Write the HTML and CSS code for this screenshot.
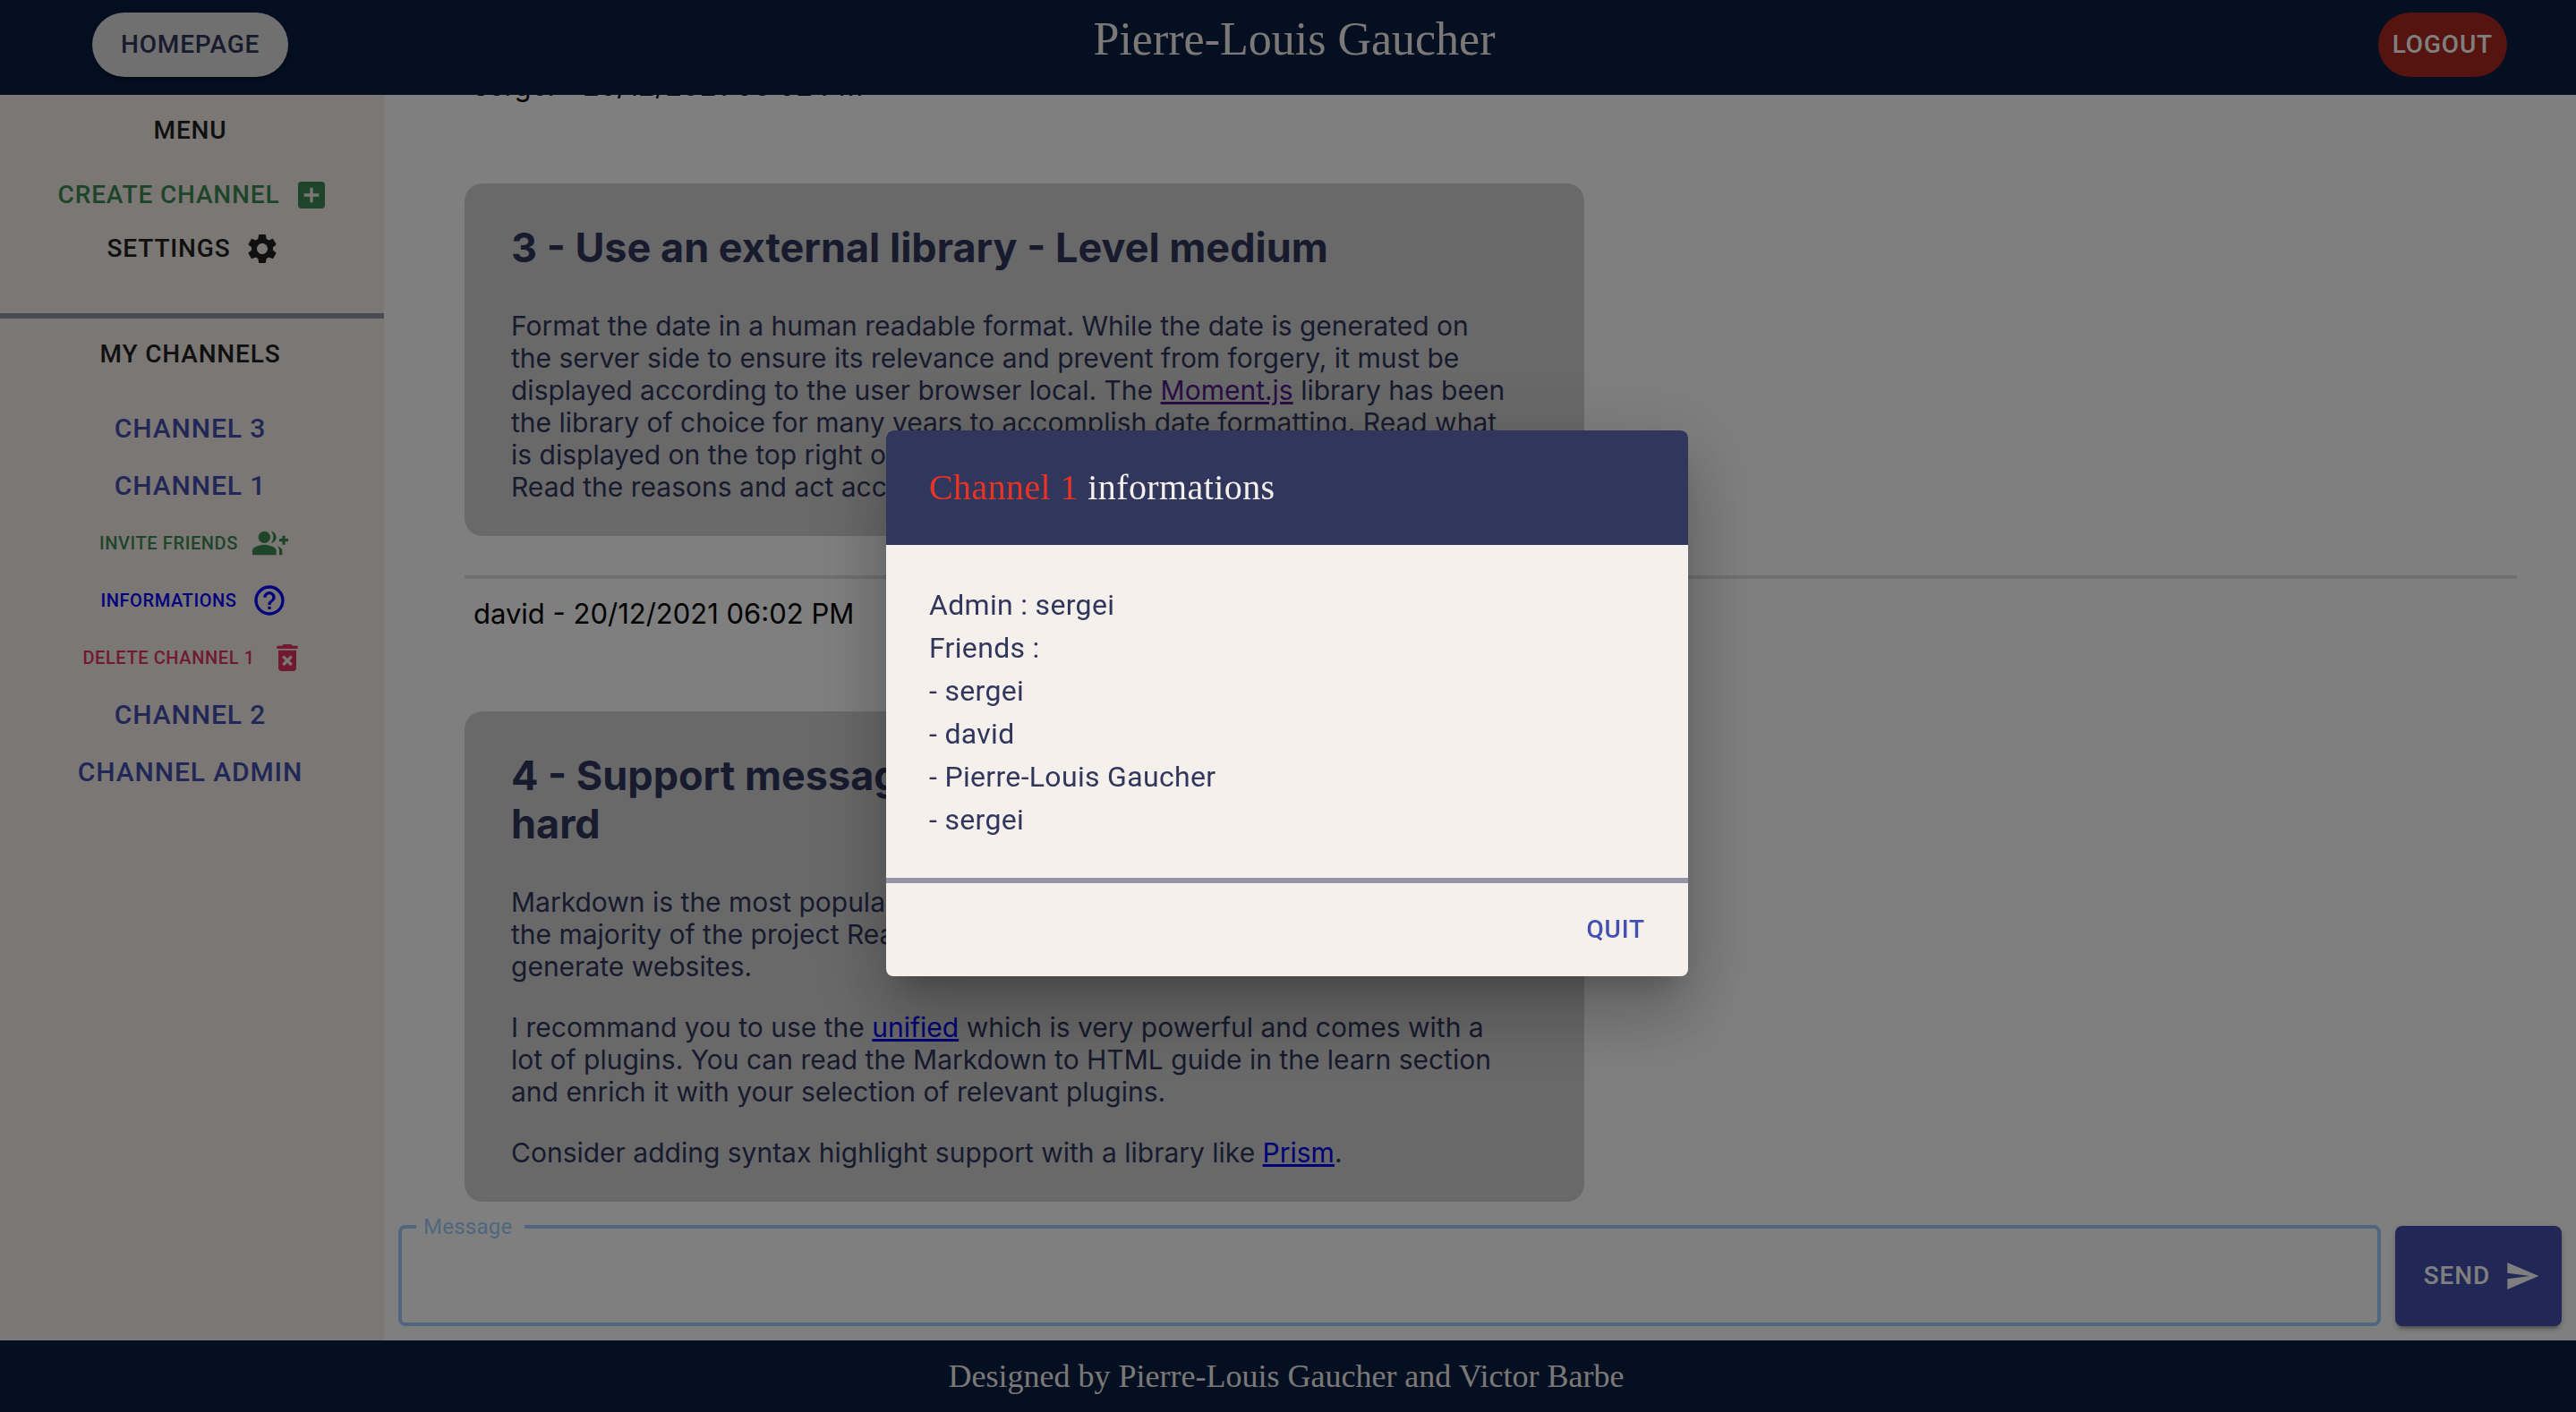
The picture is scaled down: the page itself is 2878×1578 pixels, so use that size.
FILE: index.html
```html
<!DOCTYPE html>
<html lang="en">
<head>
  <meta charset="utf-8">
  <title>Channels</title>
  <link rel="stylesheet" href="styles.css">
</head>
<body>
  <div class="app">
    <header class="topbar">
      <button class="btn btn-home" type="button">HOMEPAGE</button>
      <h1 class="topbar-title">Pierre-Louis Gaucher</h1>
      <button class="btn btn-logout" type="button">LOGOUT</button>
    </header>

    <div class="body">
      <aside class="sidebar">
        <section class="menu">
          <h2 class="side-title">MENU</h2>
          <button class="btn side-btn green" type="button">CREATE CHANNEL
            <svg class="icon" viewBox="0 0 24 24"><path d="M19 3H5c-1.11 0-2 .9-2 2v14c0 1.1.89 2 2 2h14c1.1 0 2-.9 2-2V5c0-1.1-.9-2-2-2zm-2 10h-4v4h-2v-4H7v-2h4V7h2v4h4v2z"/></svg>
          </button>
          <button class="btn side-btn dark" type="button">SETTINGS
            <svg class="icon" viewBox="0 0 24 24"><path d="M19.14 12.94c.04-.3.06-.61.06-.94 0-.32-.02-.64-.07-.94l2.03-1.58c.18-.14.23-.41.12-.61l-1.92-3.32c-.12-.22-.37-.29-.59-.22l-2.39.96c-.5-.38-1.03-.7-1.62-.94l-.36-2.54c-.04-.24-.24-.41-.48-.41h-3.84c-.24 0-.43.17-.47.41l-.36 2.54c-.59.24-1.13.57-1.62.94l-2.39-.96c-.22-.08-.47 0-.59.22L2.74 8.87c-.12.21-.08.47.12.61l2.03 1.58c-.05.3-.09.63-.09.94s.02.64.07.94l-2.03 1.58c-.18.14-.23.41-.12.61l1.92 3.32c.12.22.37.29.59.22l2.39-.96c.5.38 1.03.7 1.62.94l.36 2.54c.05.24.24.41.48.41h3.84c.24 0 .44-.17.47-.41l.36-2.54c.59-.24 1.13-.56 1.62-.94l2.39.96c.22.08.47 0 .59-.22l1.92-3.32c.12-.22.07-.47-.12-.61l-2.01-1.58zM12 15.6c-1.98 0-3.6-1.62-3.6-3.6s1.62-3.6 3.6-3.6 3.6 1.62 3.6 3.6-1.62 3.6-3.6 3.6z"/></svg>
          </button>
        </section>
        <nav class="channels">
          <h2 class="side-title">MY CHANNELS</h2>
          <ul class="channel-list">
            <li><button class="btn channel-btn" type="button">CHANNEL 3</button></li>
            <li><button class="btn channel-btn" type="button">CHANNEL 1</button></li>
            <li><button class="btn action-btn green" type="button">INVITE FRIENDS
              <svg class="icon" viewBox="0 0 24 24"><path d="M22 9V7h-2v2h-2v2h2v2h2v-2h2V9zM8 12c2.21 0 4-1.79 4-4s-1.79-4-4-4-4 1.79-4 4 1.79 4 4 4zm0 1c-2.67 0-8 1.34-8 4v3h16v-3c0-2.66-5.33-4-8-4zm4.51-8.95C13.43 5.11 14 6.49 14 8s-.57 2.89-1.49 3.95C14.47 11.7 16 10.04 16 8s-1.53-3.7-3.49-3.95zm4.02 9.78C17.42 14.66 18 15.7 18 17v3h2v-3c0-1.45-1.59-2.51-3.47-3.17z"/></svg>
            </button></li>
            <li><button class="btn action-btn blue" type="button">INFORMATIONS
              <svg class="icon" viewBox="0 0 24 24"><path d="M11 18h2v-2h-2v2zm1-16C6.48 2 2 6.48 2 12s4.48 10 10 10 10-4.48 10-10S17.52 2 12 2zm0 18c-4.41 0-8-3.59-8-8s3.59-8 8-8 8 3.59 8 8-3.59 8-8 8zm0-14c-2.21 0-4 1.79-4 4h2c0-1.1.9-2 2-2s2 .9 2 2c0 2-3 1.75-3 5h2c0-2.25 3-2.5 3-5 0-2.21-1.79-4-4-4z"/></svg>
            </button></li>
            <li><button class="btn action-btn pink" type="button">DELETE CHANNEL 1
              <svg class="icon" viewBox="0 0 24 24"><path d="M6 19c0 1.1.9 2 2 2h8c1.1 0 2-.9 2-2V7H6v12zm2.46-7.12l1.41-1.41L12 12.59l2.12-2.12 1.41 1.41L13.41 14l2.12 2.12-1.41 1.41L12 15.41l-2.12 2.12-1.41-1.41L10.59 14l-2.13-2.12zM15.5 4l-1-1h-5l-1 1H5v2h14V4z"/></svg>
            </button></li>
            <li><button class="btn channel-btn" type="button">CHANNEL 2</button></li>
            <li><button class="btn channel-btn" type="button">CHANNEL ADMIN</button></li>
          </ul>
        </nav>
      </aside>

      <main class="main">
        <div class="messages">
          <article class="message">
            <p class="meta">sergei - 20/12/2021 06:02 PM</p>
            <div class="bubble">
              <h2>3 - Use an external library - Level medium</h2>
              <p>Format the date in a human readable format. While the date is generated on the server side to ensure its relevance and prevent from forgery, it must be displayed according to the user browser local. The <a class="visited" href="#moment">Moment.js</a> library has been the library of choice for many years to accomplish date formatting. Read what is displayed on the top right of their website.<br>Read the reasons and act accordingly.</p>
            </div>
          </article>
          <article class="message">
            <p class="meta">david - 20/12/2021 06:02 PM</p>
            <div class="bubble">
              <h2>4 - Support messages in Markdown format - Level hard</h2>
              <p>Markdown is the most popular text format for developers. It is in<br>the majority of the project Readme files and is also used to<br>generate websites.</p>
              <p>I recommand you to use the <a href="#unified">unified</a> which is very powerful and comes with a lot of plugins. You can read the Markdown to HTML guide in the learn section and enrich it with your selection of relevant plugins.</p>
              <p>Consider adding syntax highlight support with a library like <a href="#prism">Prism</a>.</p>
            </div>
          </article>
        </div>
        <form class="composer">
          <fieldset class="field">
            <legend><label for="message">Message</label></legend>
            <textarea id="message" rows="2"></textarea>
          </fieldset>
          <button class="btn btn-send" type="button">SEND
            <svg class="icon" viewBox="0 0 24 24"><path d="M2.01 21L23 12 2.01 3 2 10l15 2-15 2z"/></svg>
          </button>
        </form>
      </main>
    </div>

    <footer class="footer">Designed by Pierre-Louis Gaucher and Victor Barbe</footer>
  </div>

  <div class="backdrop">
    <section class="dialog" role="dialog" aria-modal="true" aria-labelledby="dialog-title">
      <h2 class="dialog-title" id="dialog-title"><span class="accent">Channel 1</span> informations</h2>
      <div class="dialog-content">
        <p>Admin : sergei</p>
        <p>Friends :</p>
        <p>- sergei</p>
        <p>- david</p>
        <p>- Pierre-Louis Gaucher</p>
        <p>- sergei</p>
      </div>
      <div class="dialog-actions">
        <button class="btn btn-quit" type="button">QUIT</button>
      </div>
    </section>
  </div>
</body>
</html>
```
FILE: styles.css
```css
* {
  box-sizing: border-box;
}

body,
h1,
h2,
p,
ul {
  margin: 0;
  padding: 0;
}

body {
  font-family: Inter, "Liberation Sans", sans-serif;
  font-size: 30px;
  line-height: 36px;
  background: #fff;
}

.app {
  display: flex;
  flex-direction: column;
  height: 100vh;
}

/* Buttons */

.btn {
  display: inline-flex;
  align-items: center;
  justify-content: center;
  padding: 12px 16px;
  border: 0;
  border-radius: 8px;
  background: transparent;
  color: #4350af;
  font: 500 28px/48px Roboto, "Liberation Sans", sans-serif;
  letter-spacing: 0.03em;
  white-space: nowrap;
}

.icon {
  width: 40px;
  height: 40px;
  margin: 0 -8px 0 16px;
  fill: currentColor;
}

.green { color: #3c8a54; }
.dark { color: #212121; }
.blue { color: #0000ff; }
.pink { color: #e03362; }

/* Header and footer */

.topbar {
  display: grid;
  grid-template-columns: 1fr auto 1fr;
  align-items: start;
  flex: none;
  height: 106px;
  padding: 14px 77px 0 103px;
  background: #081e44;
}

.topbar-title {
  padding-right: 12px;
  font: 400 52px/60px "Liberation Serif", serif;
  color: #f6f0ec;
}

.btn-home {
  justify-self: start;
  padding: 12px 32px;
  border-radius: 36px;
  background: #e0e0e0;
  color: #30365c;
  box-shadow: 0 6px 2px -4px rgba(0, 0, 0, .2), 0 4px 4px rgba(0, 0, 0, .14), 0 2px 10px rgba(0, 0, 0, .12);
}

.btn-logout {
  justify-self: end;
  border-radius: 36px;
  background: #aa2820;
  color: #fff;
}

.footer {
  flex: none;
  padding: 20px 4px 20px 0;
  background: #081e44;
  color: #f6f0ec;
  font: 36px/40px "Liberation Serif", serif;
  text-align: center;
}

/* Sidebar */

.body {
  display: flex;
  flex: 1;
  min-height: 0;
}

.sidebar {
  flex: none;
  width: 429px;
  background: #f7efe9;
}

.menu,
.channels {
  display: flex;
  flex-direction: column;
  align-items: center;
  padding: 16px 4px 0 0;
}

.menu {
  padding-bottom: 42px;
  border-bottom: 6px solid #9495a5;
}

.side-title {
  color: #212121;
  font: 500 28px/48px Roboto, "Liberation Sans", sans-serif;
  letter-spacing: 0.03em;
}

.side-btn {
  padding: 6px 16px;
}

.menu .side-title {
  margin-bottom: 18px;
}

.channel-list {
  display: flex;
  flex-direction: column;
  align-items: center;
  margin-top: 27px;
  list-style: none;
}

.channel-list li {
  display: flex;
}

.channel-btn {
  padding: 8px 16px;
  font-size: 30px;
}

.action-btn {
  padding: 8px 16px;
  font-size: 20px;
}

/* Messages */

.main {
  display: flex;
  flex-direction: column;
  flex: 1;
  min-width: 0;
}

.messages {
  display: flex;
  flex-direction: column;
  justify-content: flex-end;
  flex: 1;
  min-height: 0;
  padding: 0 66px 0 90px;
  overflow: hidden;
}

.message {
  flex: none;
}

.message + .message {
  margin-top: 44px;
  border-top: 4px solid #e0e0e0;
}

.meta {
  padding: 21px 10px 91px;
  color: #000;
  font-size: 31px;
}

.bubble {
  width: 1251px;
  max-width: 100%;
  padding: 45px 82px 37px 52px;
  border-radius: 20px;
  background: #d3d3d3;
  color: #30365c;
}

.bubble h2 {
  margin-bottom: 42px;
  font-size: 45px;
  line-height: 54px;
}

.bubble p + p {
  margin-top: 32px;
}

.bubble a {
  color: #0000ee;
}

.bubble a.visited {
  color: #551a8b;
}

.composer {
  display: flex;
  align-items: flex-end;
  gap: 16px;
  flex: none;
  padding: 16px;
}

.field {
  flex: 1;
  min-width: 0;
  height: 123px;
  margin: 0;
  padding: 0 16px;
  border: 4px solid #9fcffd;
  border-radius: 8px;
}

.field legend {
  padding: 0 14px 0 8px;
  color: #9fcffd;
  font: 24px/24px Roboto, "Liberation Sans", sans-serif;
  letter-spacing: 0.01em;
}

.field textarea {
  display: block;
  width: 100%;
  padding: 0 8px;
  border: 0;
  outline: 0;
  resize: none;
  background: transparent;
  font: 32px/40px Roboto, "Liberation Sans", sans-serif;
}

.btn-send {
  padding: 32px;
  background: #4350af;
  color: #fff;
  box-shadow: 0 6px 2px -4px rgba(0, 0, 0, .2), 0 4px 4px rgba(0, 0, 0, .14), 0 2px 10px rgba(0, 0, 0, .12);
}

/* Dialog */

.backdrop {
  position: fixed;
  inset: 0;
  display: flex;
  align-items: center;
  justify-content: center;
  padding: 0 2px 6px 0;
  background: rgba(0, 0, 0, .5);
}

.dialog {
  width: 896px;
  max-width: 90%;
  overflow: hidden;
  border-radius: 8px;
  background: #f6f0ec;
  color: #30365c;
  box-shadow: 0 22px 30px -14px rgba(0, 0, 0, .2), 0 48px 76px 6px rgba(0, 0, 0, .14), 0 18px 92px 16px rgba(0, 0, 0, .12);
}

.dialog-title {
  padding: 32px 48px;
  background: #30365c;
  color: #f6f0ec;
  font: 400 40px/64px "Liberation Serif", serif;
  letter-spacing: 0.01em;
}

.accent {
  color: #ea3323;
}

.dialog-content {
  padding: 43px 48px 41px;
  border-bottom: 6px solid #9394a5;
  font: 32px/48px Roboto, "Liberation Sans", sans-serif;
  letter-spacing: 0.01em;
}

.dialog-actions {
  display: flex;
  justify-content: flex-end;
  padding: 16px 32px;
}
```
